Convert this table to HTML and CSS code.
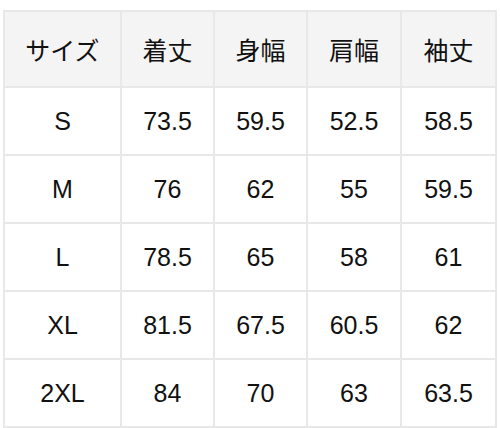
FILE: index.html
```html
<!DOCTYPE html>
<html lang="ja">
<head>
<meta charset="utf-8">
<title>サイズ表</title>
<link rel="stylesheet" href="styles.css">
</head>
<body>
<table class="size-table">
  <thead>
    <tr>
      <th class="c1">サイズ</th>
      <th class="c2">着丈</th>
      <th class="c3">身幅</th>
      <th class="c4">肩幅</th>
      <th class="c5">袖丈</th>
    </tr>
  </thead>
  <tbody>
    <tr><td>S</td><td>73.5</td><td>59.5</td><td>52.5</td><td>58.5</td></tr>
    <tr><td>M</td><td>76</td><td>62</td><td>55</td><td>59.5</td></tr>
    <tr><td>L</td><td>78.5</td><td>65</td><td>58</td><td>61</td></tr>
    <tr><td>XL</td><td>81.5</td><td>67.5</td><td>60.5</td><td>62</td></tr>
    <tr><td>2XL</td><td>84</td><td>70</td><td>63</td><td>63.5</td></tr>
  </tbody>
</table>
</body>
</html>
```
FILE: styles.css
```css
html, body {
  margin: 0;
  padding: 0;
  background: #ffffff;
}
body {
  padding: 10px 3px 0;
  font-family: "Liberation Sans", "Noto Sans CJK JP", Arial, sans-serif;
  color: #111111;
}
.size-table {
  width: 494px;
  table-layout: fixed;
  border-collapse: separate;
  border-spacing: 0;
  border-left: 2px solid #e8e8e8;
  border-top: 2px solid #e8e8e8;
  font-size: 25px;
}
.size-table th,
.size-table td {
  box-sizing: border-box;
  border-right: 2px solid #e8e8e8;
  border-bottom: 2px solid #e8e8e8;
  text-align: center;
  vertical-align: middle;
  padding: 0;
  font-weight: normal;
}
.size-table th {
  background: #f4f4f4;
  height: 76px;
  font-family: "Noto Sans CJK JP", "Liberation Sans", sans-serif;
}
.size-table td {
  height: 68px;
}
.c1 { width: 117px; }
.c2 { width: 93px; }
.c3 { width: 93px; }
.c4 { width: 94px; }
.c5 { width: 95px; }
```
